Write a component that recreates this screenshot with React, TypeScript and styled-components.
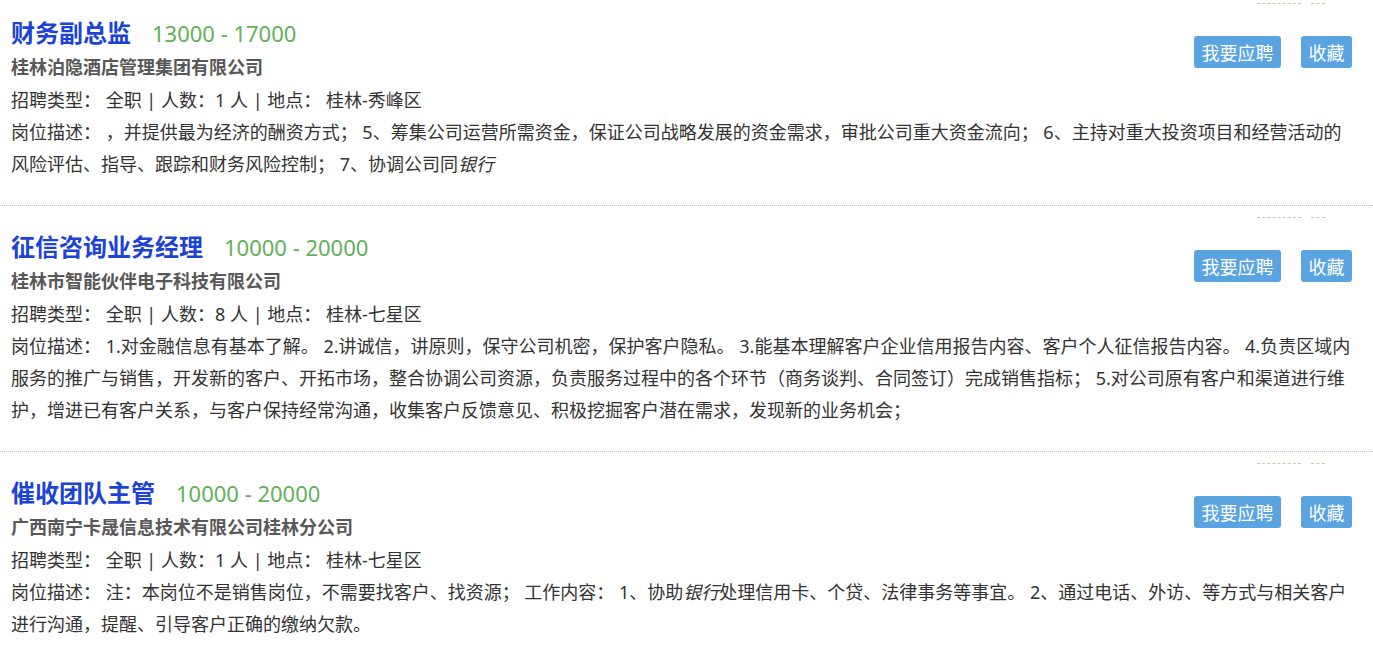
import styled, { createGlobalStyle } from 'styled-components'

const GlobalStyle = createGlobalStyle`
  html, body {
    margin: 0;
    padding: 0;
    background: #fff;
  }
  body {
    font-family: "Noto Sans", "Noto Sans CJK SC", sans-serif;
    color: #333;
    overflow: hidden;
  }
`

// list is scrolled a little, the first item starts above the window
const JobList = styled.div`
  margin-top: -8px;
`

const JobItem = styled.div`
  position: relative;
  padding: 23px 21px 25px 11px;
  border-bottom: 1px dotted #bdbdbd;
`

const DateMark = styled.div`
  position: absolute;
  top: 11px;
  right: 48px;
  display: flex;
  gap: 10px;

  span {
    display: block;
    height: 0;
    border-top: 1px dashed #cfc4b0;
  }
`

const Header = styled.div`
  display: flex;
  justify-content: space-between;
  align-items: flex-start;
`

const Main = styled.div`
  display: flex;
  flex-direction: column;
`

const TitleRow = styled.div`
  display: flex;
  align-items: baseline;
  gap: 21px;
  line-height: 36px;
`

const Title = styled.a`
  font-size: 24px;
  font-weight: 700;
  color: #1b43d8;
  text-decoration: none;
`

const Salary = styled.span`
  font-size: 22px;
  color: #62b057;
`

const Company = styled.div`
  font-size: 18px;
  font-weight: 700;
  color: #585858;
  line-height: 32px;
`

const Meta = styled.div`
  margin-top: 1px;
  font-size: 18px;
  line-height: 32px;
  color: #333;
`

const Actions = styled.div`
  display: flex;
  gap: 20px;
  margin-top: 21px;
`

const ActionButton = styled.button`
  height: 32px;
  padding: 0 7.5px;
  border: none;
  border-radius: 3px;
  background: #5ba4e2;
  color: #fff;
  font-family: "Noto Sans CJK SC", sans-serif;
  font-size: 18px;
  cursor: pointer;
`

const Description = styled.p`
  margin: 0;
  font-size: 18px;
  line-height: 32px;
  color: #333;
`

const jobs = [
  {
    title: '财务副总监',
    salary: '13000 - 17000',
    company: '桂林泊隐酒店管理集团有限公司',
    count: 1,
    place: '桂林-秀峰区',
    desc: (
      <>
        岗位描述： ，并提供最为经济的酬资方式； 5、筹集公司运营所需资金，保证公司战略发展的资金需求，审批公司重大资金流向； 6、主持对重大投资项目和经营活动的风险评估、指导、跟踪和财务风险控制； 7、协调公司同<em>银行</em>
      </>
    ),
  },
  {
    title: '征信咨询业务经理',
    salary: '10000 - 20000',
    company: '桂林市智能伙伴电子科技有限公司',
    count: 8,
    place: '桂林-七星区',
    desc: (
      <>
        岗位描述： 1.对金融信息有基本了解。 2.讲诚信，讲原则，保守公司机密，保护客户隐私。 3.能基本理解客户企业信用报告内容、客户个人征信报告内容。 4.负责区域内服务的推广与销售，开发新的客户、开拓市场，整合协调公司资源，负责服务过程中的各个环节（商务谈判、合同签订）完成销售指标； 5.对公司原有客户和渠道进行维护，增进已有客户关系，与客户保持经常沟通，收集客户反馈意见、积极挖掘客户潜在需求，发现新的业务机会；
      </>
    ),
  },
  {
    title: '催收团队主管',
    salary: '10000 - 20000',
    company: '广西南宁卡晟信息技术有限公司桂林分公司',
    count: 1,
    place: '桂林-七星区',
    desc: (
      <>
        岗位描述： 注：本岗位不是销售岗位，不需要找客户、找资源； 工作内容： 1、协助<em>银行</em>处理信用卡、个贷、法律事务等事宜。 2、通过电话、外访、等方式与相关客户进行沟通，提醒、引导客户正确的缴纳欠款。
      </>
    ),
  },
]

const App = () => {
  return (
    <>
      <GlobalStyle />
      <JobList>
        {jobs.map((job) => (
          <JobItem key={job.title}>
            <DateMark>
              <span style={{ width: 44 }} />
              <span style={{ width: 14 }} />
            </DateMark>
            <Header>
              <Main>
                <TitleRow>
                  <Title href="#">{job.title}</Title>
                  <Salary>{job.salary}</Salary>
                </TitleRow>
                <Company>{job.company}</Company>
                <Meta>
                  招聘类型： 全职 | 人数：{job.count} 人 | 地点： {job.place}
                </Meta>
              </Main>
              <Actions>
                <ActionButton>我要应聘</ActionButton>
                <ActionButton>收藏</ActionButton>
              </Actions>
            </Header>
            <Description>{job.desc}</Description>
          </JobItem>
        ))}
      </JobList>
    </>
  )
}

export default App
